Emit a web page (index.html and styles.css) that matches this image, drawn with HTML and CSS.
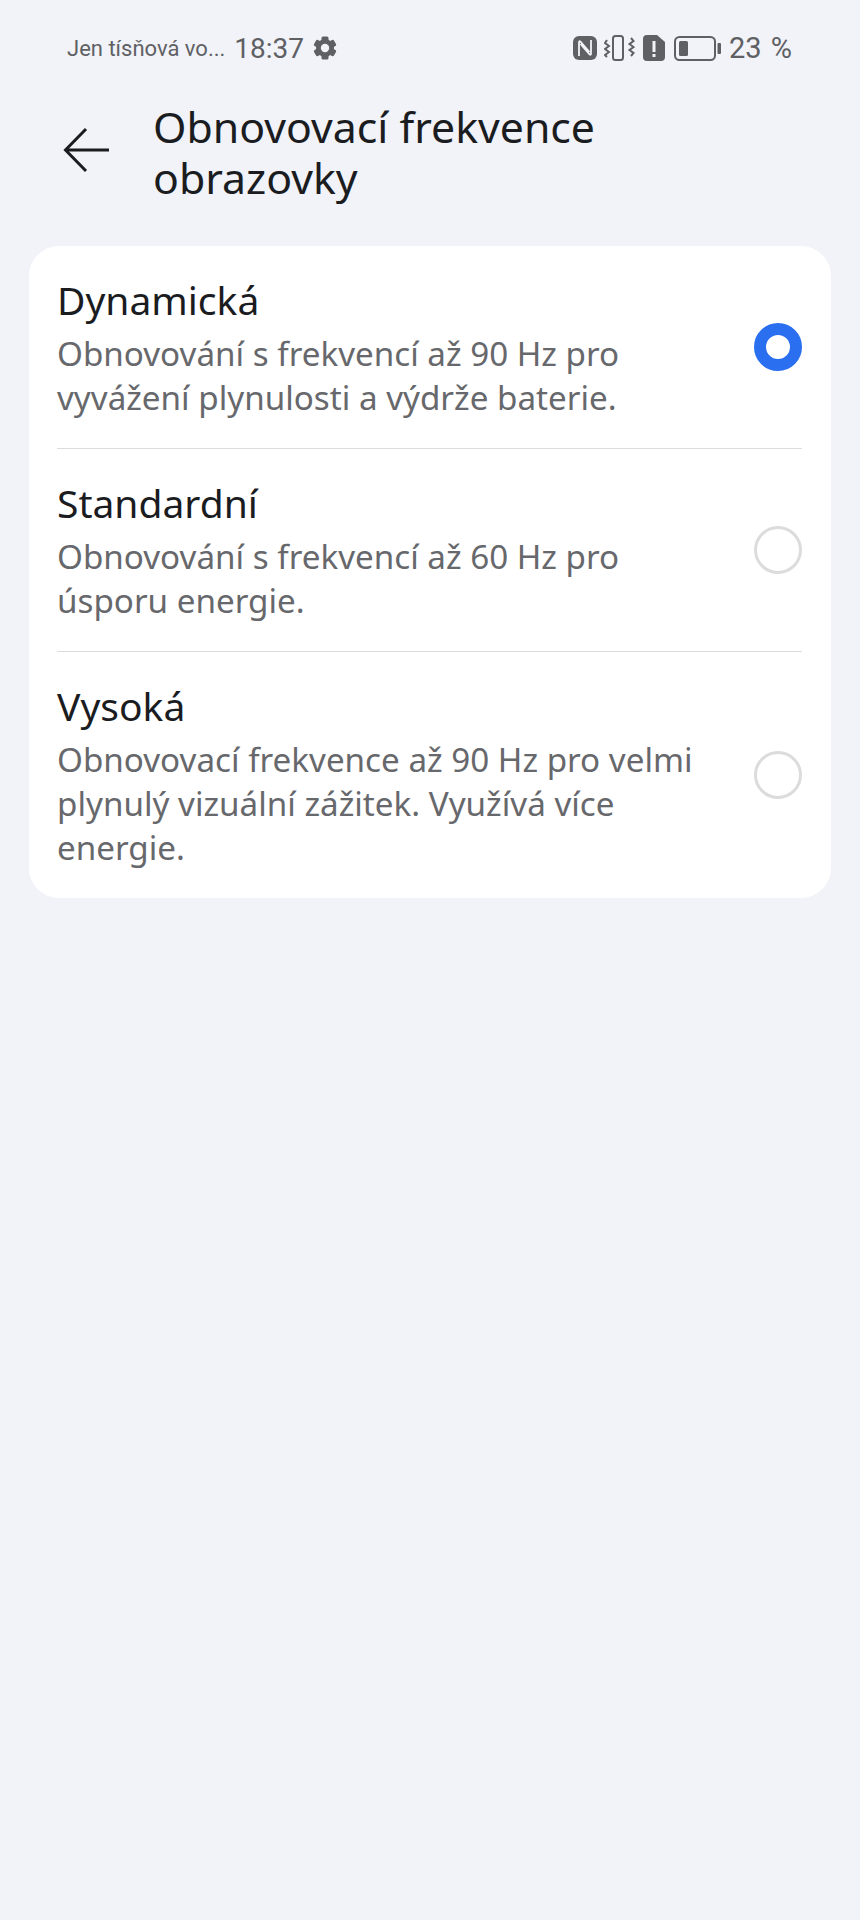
FILE: index.html
```html
<!DOCTYPE html>
<html lang="cs">
<head>
    <meta charset="UTF-8">
    <meta name="viewport" content="width=device-width, initial-scale=1.0">
    <title>Obnovovací frekvence obrazovky</title>
    <link rel="stylesheet" href="styles.css">
</head>
<body>
    <div class="statusbar">
        <div class="status-left">
            <span class="carrier">Jen tísňová vo...</span>
            <span class="clock">18:37</span>
            <svg class="gear" width="24" height="24" viewBox="0 0 24 24" fill="#5f6064">
                <circle cx="12" cy="12" r="9"/>
                <rect x="8.500" y="0.500" width="7" height="23" rx="1.500"/>
                <rect x="8.500" y="0.500" width="7" height="23" rx="1.500" transform="rotate(60 12 12)"/>
                <rect x="8.500" y="0.500" width="7" height="23" rx="1.500" transform="rotate(120 12 12)"/>
                <circle cx="12" cy="12" r="4.200" fill="#f1f3f8"/>
            </svg>
        </div>
        <div class="status-right">
            <svg class="nfc" width="24" height="24" viewBox="0 0 24 24">
                <rect width="24" height="24" rx="6" fill="#5f6064"/>
                <path d="M6 20V6.500q0-2 1.500-.8L16.500 16M18 4v13.500q0 2-1.500.8L7.500 8" fill="none" stroke="#f1f3f8" stroke-width="1.800"/>
            </svg>
            <svg width="31" height="26" viewBox="0 0 31 26" fill="none" stroke="#5f6064" stroke-width="2">
                <rect x="9" y="1" width="10" height="24" rx="2.500"/>
                <path d="M3 5L1 8l4 3-4 3 4 3-4 3 2 2M27 3l2.500 3-4 3 4 3-4 3 4 3-2.500 3"/>
            </svg>
            <svg width="22" height="26" viewBox="0 0 22 26">
                <path fill="#5f6064" d="M4 0h10l8 7v15a4 4 0 0 1-4 4H4a4 4 0 0 1-4-4V4a4 4 0 0 1 4-4z"/>
                <rect x="9.500" y="6" width="3" height="11" fill="#f1f3f8"/>
                <rect x="9.500" y="19" width="3" height="3" fill="#f1f3f8"/>
            </svg>
            <svg class="battery" width="47" height="25" viewBox="0 0 47 25">
                <rect x="1" y="1" width="40" height="23" rx="4.500" fill="none" stroke="#5f6064" stroke-width="2"/>
                <rect x="5" y="5" width="9" height="15" rx="1.500" fill="#5f6064"/>
                <rect x="43.500" y="7" width="3.500" height="11" rx="1" fill="#5f6064"/>
            </svg>
            <span class="percent">23 %</span>
        </div>
    </div>

    <header class="topbar">
        <svg class="back" width="48" height="48" viewBox="0 0 48 48" fill="none" stroke="#1b1c1f" stroke-width="3"><path d="M47 24H4M24 3L3.500 24 24 45"/></svg>
        <h1>Obnovovací frekvence obrazovky</h1>
    </header>

    <main class="card">
        <div class="option">
            <div class="option-text">
                <div class="option-title">Dynamická</div>
                <div class="option-desc">Obnovování s frekvencí až 90 Hz pro vyvážení plynulosti a výdrže baterie.</div>
            </div>
            <span class="radio radio-on"></span>
        </div>
        <div class="option">
            <div class="option-text">
                <div class="option-title">Standardní</div>
                <div class="option-desc">Obnovování s frekvencí až 60 Hz pro úsporu energie.</div>
            </div>
            <span class="radio"></span>
        </div>
        <div class="option">
            <div class="option-text">
                <div class="option-title">Vysoká</div>
                <div class="option-desc">Obnovovací frekvence až 90 Hz pro velmi plynulý vizuální zážitek. Využívá více energie.</div>
            </div>
            <span class="radio"></span>
        </div>
    </main>
</body>
</html>
```

FILE: styles.css
```css
/* Page */
body {
    margin: 0;
    height: 1920px;
    overflow: hidden;
    background: #f1f3f8;
    font-family: "Noto Sans", sans-serif;
    color: #1b1c1f;
}

/* Status bar */
.statusbar {
    display: flex;
    justify-content: space-between;
    align-items: center;
    height: 48px;
    padding: 24px 68px 0 67px;
    color: #5f6064;
}

.status-left,
.status-right {
    display: flex;
    align-items: center;
}

.carrier {
    font-family: Roboto, sans-serif;
    font-size: 22px;
    margin-right: 9px;
}

.clock {
    font-family: Roboto, sans-serif;
    font-size: 28px;
    margin-right: 9px;
}

.status-right {
    gap: 8px;
}

.nfc {
    margin-right: -1px;
}

.battery {
    margin-left: 1px;
}

.percent {
    font-family: Roboto, sans-serif;
    font-size: 29px;
    word-spacing: 2px;
}

/* Title */
.topbar {
    display: flex;
    align-items: center;
    height: 102px;
    padding: 27px 29px 0 62px;
}

.back {
    flex: none;
    margin-right: 43px;
}

.topbar h1 {
    margin: 3px 0 0;
    width: 520px;
    font-size: 42.8px;
    font-weight: 400;
    line-height: 51px;
}

/* Options */
.card {
    margin: 45px 29px 0;
    padding: 0 29px 0 28px;
    background: #fff;
    border-radius: 30px;
}

.option {
    display: flex;
    align-items: center;
    padding: 28.5px 0;
    border-bottom: 1px solid #dcdcde;
}

.option:last-child {
    border-bottom: none;
}

.option-text {
    flex: 1;
    padding-top: 5px;
}

.option-title {
    font-size: 39px;
    font-weight: 400;
    line-height: 40px;
    margin-bottom: 12px;
}

.option-desc {
    width: 660px;
    font-size: 33.2px;
    line-height: 44px;
    color: #67686c;
}

.radio {
    flex: none;
    box-sizing: border-box;
    width: 48px;
    height: 48px;
    border: 3px solid #dcdcdc;
    border-radius: 50%;
}

.radio-on {
    border: 12px solid #2a6ff0;
}
```
